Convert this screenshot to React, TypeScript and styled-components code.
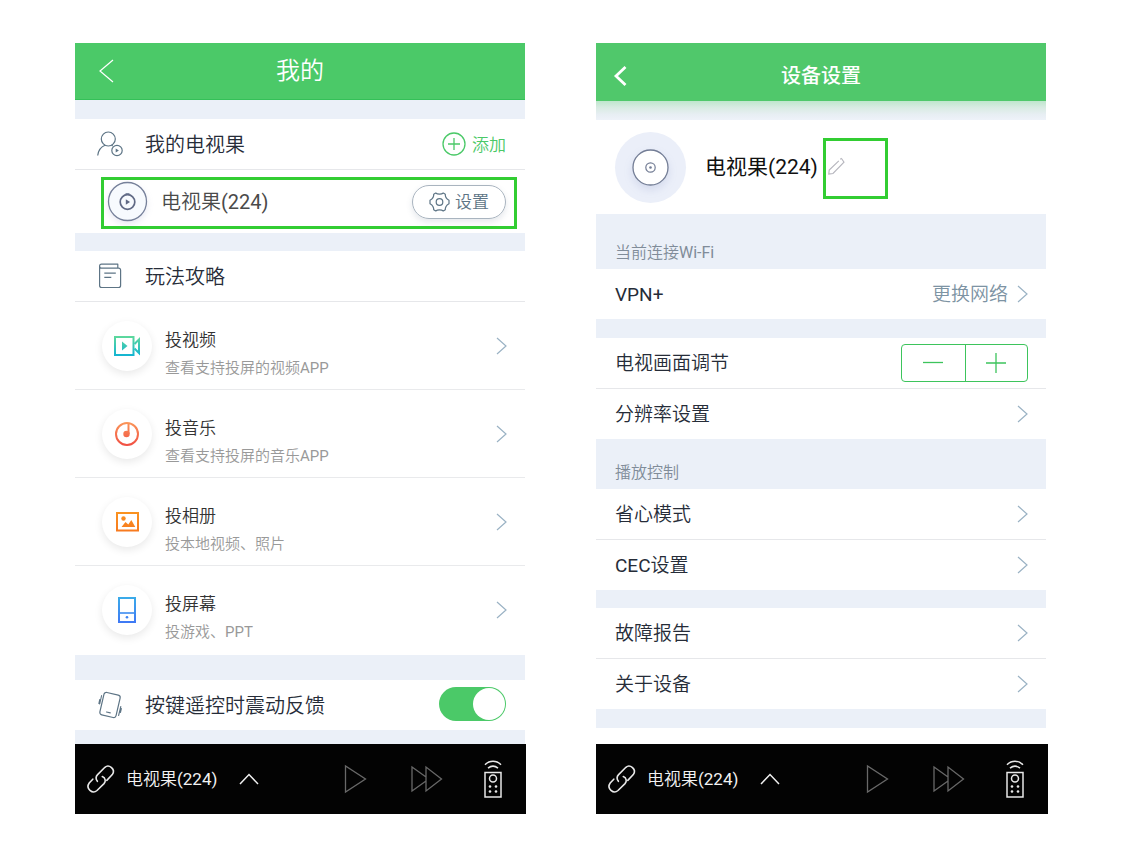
import React from "react";
import styled, { createGlobalStyle, css } from "styled-components";

const green = "#4bc968";
const band = "#ebf0f8";
const slate = "#5d7485";

const GlobalStyle = createGlobalStyle`
  *, *::before, *::after { box-sizing: border-box; }
  body {
    margin: 0;
    background: #fff;
    color: #262c38;
    font-family: Roboto, "Noto Sans CJK SC DemiLight", "Noto Sans CJK SC", sans-serif;
    font-weight: 400;
  }
  h1, h2, p, ul { margin: 0; padding: 0; font-size: inherit; font-weight: inherit; }
  ul { list-style: none; }
  button { font: inherit; color: inherit; background: none; border: 0; padding: 0; cursor: pointer; }
  a { color: inherit; text-decoration: none; }
  svg { display: block; flex: none; overflow: visible; }
`;

const Board = styled.main`
  display: grid;
  grid-template-columns: repeat(2, minmax(0, 1fr));
  gap: 71px;
  padding: 43px 88px 41px 75px;
`;

const Phone = styled.section`
  display: flex;
  flex-direction: column;
`;

const Header = styled.header<{ $raised?: boolean }>`
  display: grid;
  grid-template-columns: 60px 1fr 60px;
  align-items: center;
  height: 57px;
  color: #fff;
  background: ${green};
  border-bottom: 1px solid #34c058;
  font-size: 24px;
  line-height: 32px;
  h1 { text-align: center; }
  button { justify-self: start; margin-left: 24px; }

  ${(p) =>
    p.$raised &&
    css`
      height: 58px;
      padding: 8px 0 0;
      background: #50c86b;
      border-bottom: 0;
      font-family: Roboto, "Noto Sans CJK SC", sans-serif;
      font-size: 20px;
      font-weight: 500;
      button { margin-left: 18px; }
    `}
`;

const Band = styled.div<{ $h: number; $shade?: boolean }>`
  height: ${(p) => p.$h}px;
  background: ${(p) =>
    p.$shade ? "linear-gradient(#bfe6cd, #d9ebe3 35%, #e7eef3 70%, #eef2f9)" : band};
`;

const GroupLabel = styled.h2<{ $h: number }>`
  && { font-size: 16px; }
  display: flex;
  align-items: flex-end;
  height: ${(p) => p.$h}px;
  padding: 0 19px 4px;
  background: ${band};
  color: #808c99;
  line-height: 24px;
`;

const MenuHead = styled.div<{ $line?: boolean }>`
  display: flex;
  align-items: center;
  height: ${(p) => (p.$line ? 51 : 50)}px;
  padding: 0 19px 0 22px;
  border-bottom: ${(p) => (p.$line ? "1px solid #e6e7ea" : "0")};
  font-size: 20px;
  line-height: 28px;
  svg { margin-right: 22px; }
`;

const MenuTitle = styled.label`
  flex: 1;
  padding-top: 2px;
`;

const AddButton = styled.button`
  display: flex;
  align-items: center;
  color: ${green};
  font-size: 17px;
  line-height: 24px;
  && svg { margin-right: 6px; }
  span { padding-top: 2px; }
`;

const DeviceWrap = styled.div`
  padding: 7px 8px 4px 26px;
`;

const DeviceCard = styled.div`
  display: flex;
  align-items: center;
  height: 52px;
  padding: 0 8px 3px 3px;
  border: 3px solid #32cd32;
  color: #4a4a4a;
  font-size: 20px;
  line-height: 28px;
  span { flex: 1; margin-left: 13px; }
`;

const PillButton = styled.button`
  display: flex;
  align-items: center;
  justify-content: center;
  gap: 5px;
  width: 94px;
  height: 34px;
  border: 1px solid #a9b4bf;
  border-radius: 17px;
  box-shadow: 0 3px 6px rgba(70, 90, 120, 0.14);
  color: ${slate};
  font-size: 17px;
  line-height: 24px;
`;

const Guide = styled.a`
  display: flex;
  align-items: center;
  height: 88px;
  padding: 0 18px 0 27px;
  border-bottom: 1px solid #e9eaec;
  li:last-child > & { border-bottom-color: transparent; }
`;

const GuideList = styled.ul`
  && { padding-bottom: 1px; }
`;

const Disc = styled.span`
  display: grid;
  place-items: center;
  width: 50px;
  height: 50px;
  margin-right: 13px;
  border-radius: 50%;
  background: #fff;
  box-shadow: 0 3px 8px rgba(0, 0, 0, 0.09);
`;

const GuideText = styled.div`
  flex: 1;
  padding-top: 16px;
  line-height: 28px;
  h2 { color: #333; font-size: 17px; }
  p { color: #999; font-size: 15px; }
`;

const Toggle = styled.input`
  appearance: none;
  width: 67px;
  height: 34px;
  margin: 0 0 2px;
  padding: 1px;
  border-radius: 17px;
  background: ${green};
  cursor: pointer;
  &::before {
    content: "";
    display: block;
    width: 32px;
    height: 32px;
    border-radius: 50%;
    background: #fff;
  }
  &:checked::before { margin-left: auto; }
  &:not(:checked) { background: #ccd3da; }
`;

const Profile = styled.div`
  display: flex;
  align-items: center;
  height: 94px;
  padding: 0 19px;
  color: #111;
  font-family: Roboto, "Noto Sans CJK SC", sans-serif;
  font-size: 21px;
  line-height: 28px;
`;

const Avatar = styled.div`
  display: grid;
  place-items: center;
  width: 71px;
  height: 71px;
  margin-right: 19px;
  border-radius: 50%;
  background: #ebeff9;
`;

const EditButton = styled.button`
  display: flex;
  align-items: center;
  width: 65px;
  height: 61px;
  margin: 2px 0 0 5px;
  padding: 0 0 4px 2px;
  border: 3px solid #32cd32;
`;

const rowStyle = css<{ $line?: boolean }>`
  display: flex;
  align-items: center;
  gap: 9px;
  height: ${(p) => (p.$line ? 51 : 50)}px;
  padding: 0 18px 0 19px;
  border-bottom: ${(p) => (p.$line ? "1px solid #e6e7ea" : "0")};
  font-size: 19px;
  line-height: 28px;
`;
const Row = styled.div<{ $line?: boolean }>`${rowStyle}`;
const LinkRow = styled.a<{ $line?: boolean }>`${rowStyle}`;
const RowName = styled.span`
  flex: 1;
  padding-top: 2px;
`;
const RowValue = styled.span`
  padding-top: 2px;
  color: #7d93a3;
`;

const Stepper = styled.div`
  display: grid;
  grid-template-columns: 1fr 1fr;
  width: 127px;
  height: 38px;
  border: 1px solid #3dc45c;
  border-radius: 4px;
  button { display: grid; place-items: center; }
  button + button { border-left: 1px solid #3dc45c; }
`;

const Dock = styled.footer<{ $bleed: number }>`
  display: flex;
  align-items: center;
  height: 70px;
  margin: auto -${(p) => p.$bleed}px 0 0;
  padding: 0 24px 0 12px;
  background: #030303;
  color: #f2f2f2;
  font-size: 17px;
  line-height: 24px;
`;
const DockDevice = styled.button`
  display: flex;
  align-items: center;
  margin-right: auto;
  span { margin: 0 22px 0 11px; }
`;
const DockControls = styled.div`
  display: flex;
  align-items: center;
  gap: 42px;
`;

const Chevron = () => (
  <svg width="11" height="18" fill="none" stroke="#9ab2c4" strokeWidth="1.2">
    <path d="M1 1l9 8-9 8" />
  </svg>
);

const DeviceIcon = () => (
  <svg width="41" height="41" fill="none" stroke="#76809a">
    <circle cx="20.500" cy="20.500" r="19" fill="#f7fafe" strokeWidth="1.300" style={{ filter: "drop-shadow(0 3px 3px rgba(90,100,170,.14))" }} />
    <circle cx="20.500" cy="21" r="7.300" stroke="#606985" strokeWidth="1.700" />
    <path d="M18.800 18.300v5.400l4.300-2.700z" fill="#606985" stroke="none" />
    <path d="M18.500 12.600h4" strokeWidth="1" />
  </svg>
);

const MenuUser = () => (
  <svg width="26" height="26" viewBox="0 0 26 26" fill="none" stroke={slate} strokeWidth="1.2">
    <circle cx="11.300" cy="8" r="7" />
    <path d="M.7 24.500c.6-5.200 3-8.600 7.300-10.300M14.500 14.300l1.300.7" />
    <circle cx="20" cy="19.500" r="5.200" />
    <path d="M18.700 17.500v4l3.200-2z" fill={slate} stroke="none" />
  </svg>
);

const MenuBook = () => (
  <svg width="26" height="26" viewBox="0 0 26 26" fill="none" stroke={slate} strokeWidth="1.200" strokeLinejoin="round">
    <path d="M2.600 3.200V22.500a2 2 0 0 0 2 2h17a2 2 0 0 0 2-2V7.200a2 2 0 0 0-2-2H4.500c-2.500 0-2.500-4.100 0-4.100h16.300v4.100M7.300 10.200h11.500M7.300 14.300h7" />
  </svg>
);

const MenuShake = () => (
  <svg width="26" height="28" viewBox="0 0 26 28" fill="none" stroke={slate} strokeWidth="1.200" strokeLinecap="round">
    <rect x="4.700" y="2.500" width="16.600" height="23" rx="2.500" transform="rotate(13 13 14)" />
    <path d="M9.500 21l3.800.9M4.600 4.500L2.700 13M2.700 8.500l-.8 4M21.600 24.500l2.200-9M23.500 21.500l.9-4" strokeWidth="1.100" />
  </svg>
);

const VideoIcon = () => (
  <svg width="26" height="20" viewBox="0 0 26 20" fill="none" stroke="url(#gv)" strokeWidth="2">
    <defs>
      <linearGradient id="gv" gradientUnits="userSpaceOnUse" x1="0" y1="0" x2="0" y2="20">
        <stop stopColor="#5fd99b" />
        <stop offset="1" stopColor="#12b4d3" />
      </linearGradient>
    </defs>
    <path d="M1 1h18.500v18H1z" />
    <path d="M20.500 8l4.500-4.500v13.500l-4.500-4.500" strokeWidth="2" />
    <path d="M8 5.500v9l5.500-4.500z" fill="url(#gv)" stroke="none" />
  </svg>
);

const MusicIcon = () => (
  <svg width="26" height="26" viewBox="0 0 26 26" fill="none" stroke="url(#gm)" strokeWidth="2">
    <defs>
      <linearGradient id="gm" gradientUnits="userSpaceOnUse" x1="0" y1="0" x2="0" y2="26">
        <stop stopColor="#fb9a5b" />
        <stop offset="1" stopColor="#f04a41" />
      </linearGradient>
    </defs>
    <circle cx="13" cy="13" r="11" />
    <path d="M14.500 2v11" />
    <circle cx="12.500" cy="13" r="3.200" fill="url(#gm)" stroke="none" />
  </svg>
);

const PhotoIcon = () => (
  <svg width="23" height="20" viewBox="0 0 23 20" fill="none" stroke="url(#gp)" strokeWidth="2">
    <defs>
      <linearGradient id="gp" gradientUnits="userSpaceOnUse" x1="0" y1="0" x2="0" y2="20">
        <stop stopColor="#fa9320" />
        <stop offset="1" stopColor="#f7791f" />
      </linearGradient>
    </defs>
    <path d="M1 1h21v17.500H1z" />
    <circle cx="7.500" cy="6.500" r="2.200" fill="url(#gp)" stroke="none" />
    <path d="M5.500 15l4-5 2.800 2.500 3-4.500 4 7z" fill="url(#gp)" stroke="none" />
  </svg>
);

const ScreenIcon = () => (
  <svg width="18" height="26" viewBox="0 0 18 26" fill="none" stroke="url(#gs)" strokeWidth="2">
    <defs>
      <linearGradient id="gs" gradientUnits="userSpaceOnUse" x1="0" y1="0" x2="0" y2="26">
        <stop stopColor="#3aace9" />
        <stop offset="1" stopColor="#3f78f5" />
      </linearGradient>
    </defs>
    <path d="M1 1h16v24H1z" />
    <path d="M1 16h16" strokeWidth="1.600" />
    <circle cx="9" cy="20.300" r="1.300" fill="url(#gs)" stroke="none" />
  </svg>
);

const PlayerDock = ({ bleed }: { bleed: number }) => (
  <Dock $bleed={bleed}>
    <DockDevice type="button">
      <svg width="28" height="30" viewBox="0 0 28 30" fill="none" stroke="#e8e8e8" strokeWidth="1.600" strokeLinecap="round">
        <path d="M10.400 17.300C8.600 14.900 8.800 12.500 10.600 10.600L17.900 3.300C22 -.3 29 5.500 25.300 10.600L19.800 16.400M15.300 12.600C18.700 14 19 17.400 17 19.600L10 26.500C5.500 30.500-1.700 24.500 2.200 19L5.800 15.200" />
      </svg>
      <span>电视果(224)</span>
      <svg width="20" height="12" fill="none" stroke="#f0f0f0" strokeWidth="1.500">
        <path d="M1 11l9-9.500L19 11" />
      </svg>
    </DockDevice>
    <DockControls>
      <button type="button" aria-label="播放">
        <svg width="24" height="28" fill="none" stroke="#686868" strokeWidth="1.300">
          <path d="M.5 1v26l20-13z" />
        </svg>
      </button>
      <button type="button" aria-label="快进">
        <svg width="31" height="28" fill="none" stroke="#686868" strokeWidth="1.300">
          <path d="M15 12L1 2v24l14-10M15 2v24l15.500-12z" />
        </svg>
      </button>
      <button type="button" aria-label="遥控器">
        <svg width="18" height="38" fill="none" stroke="#e8e8e8" strokeWidth="1.500">
          <path d="M1 12.500h16v24.500H1zM1 4.800c4.500-4.700 11.500-4.700 16 0M4 8.200c3-2.500 7-2.500 10 0" />
          <circle cx="9" cy="18.500" r="3.500" />
          <g fill="#e8e8e8" stroke="none">
            <circle cx="6" cy="26.500" r="1.300" />
            <circle cx="12" cy="26.500" r="1.300" />
            <circle cx="6" cy="31.500" r="1.300" />
            <circle cx="12" cy="31.500" r="1.300" />
          </g>
        </svg>
      </button>
    </DockControls>
  </Dock>
);

const guides = [
  { title: "投视频", note: "查看支持投屏的视频APP", Icon: VideoIcon },
  { title: "投音乐", note: "查看支持投屏的音乐APP", Icon: MusicIcon },
  { title: "投相册", note: "投本地视频、照片", Icon: PhotoIcon },
  { title: "投屏幕", note: "投游戏、PPT", Icon: ScreenIcon },
];

const SettingLink = ({ name, value, line }: { name: string; value?: string; line?: boolean }) => (
  <LinkRow href="#" $line={line}>
    <RowName>{name}</RowName>
    {value && <RowValue>{value}</RowValue>}
    <Chevron />
  </LinkRow>
);

const MinePage = () => (
  <Phone>
    <Header>
      <button type="button" aria-label="返回">
        <svg width="15" height="24" fill="none" stroke="#fff" strokeWidth="1.200">
          <path d="M14 1L1 12l13 11" />
        </svg>
      </button>
      <h1>我的</h1>
    </Header>
    <Band $h={19} />
    <MenuHead $line>
      <MenuUser />
      <MenuTitle as="h2">我的电视果</MenuTitle>
      <AddButton type="button">
        <svg width="24" height="24" fill="none" stroke={green} strokeWidth="1.300">
          <circle cx="12" cy="12" r="11" />
          <path d="M12 6v12M6 12h12" />
        </svg>
        <span>添加</span>
      </AddButton>
    </MenuHead>
    <DeviceWrap>
      <DeviceCard>
        <DeviceIcon />
        <span>电视果(224)</span>
        <PillButton type="button">
          <svg width="21" height="20" viewBox="0 0 21 20" fill="none" stroke={slate} strokeWidth="1.200" strokeLinejoin="round">
            <path d="M6.700 1c1.700 1.400 5.900 1.400 7.600 0l2 1.200c-.2 2.400 1.200 4.700 3.700 6.100v3.400c-2.500 1.400-3.900 3.700-3.700 6.100l-2 1.200c-1.700-1.400-5.900-1.400-7.600 0l-2-1.200C4.900 15.400 3.500 13.100 1 11.700V8.300c2.500-1.400 3.900-3.700 3.700-6.100z" />
            <circle cx="10.500" cy="10" r="3.300" />
          </svg>
          设置
        </PillButton>
      </DeviceCard>
    </DeviceWrap>
    <Band $h={18} />
    <MenuHead $line>
      <MenuBook />
      <MenuTitle as="h2">玩法攻略</MenuTitle>
    </MenuHead>
    <GuideList>
      {guides.map(({ title, note, Icon }) => (
        <li key={title}>
          <Guide href="#">
            <Disc>
              <Icon />
            </Disc>
            <GuideText>
              <h2>{title}</h2>
              <p>{note}</p>
            </GuideText>
            <Chevron />
          </Guide>
        </li>
      ))}
    </GuideList>
    <Band $h={25} />
    <MenuHead>
      <MenuShake />
      <MenuTitle htmlFor="vibrate">按键遥控时震动反馈</MenuTitle>
      <Toggle id="vibrate" type="checkbox" defaultChecked />
    </MenuHead>
    <Band $h={14} />
    <PlayerDock bleed={1} />
  </Phone>
);

const DevicePage = () => (
  <Phone>
    <Header $raised>
      <button type="button" aria-label="返回">
        <svg width="13" height="20" fill="none" stroke="#fff" strokeWidth="2.800">
          <path d="M11.500 1L2 10l9.500 9" />
        </svg>
      </button>
      <h1>设备设置</h1>
    </Header>
    <Band $h={19} $shade />
    <Profile>
      <Avatar>
        <svg width="37" height="37" fill="none" stroke="#737d95">
          <circle cx="18.500" cy="18.500" r="17.500" fill="#fff" strokeWidth="1.300" style={{ filter: "drop-shadow(0 4px 4px rgba(80,100,170,.15))" }} />
          <circle cx="18.500" cy="18.500" r="4.700" strokeWidth="1.200" />
          <circle cx="18.500" cy="18.500" r="1.300" fill="#737d95" stroke="none" />
        </svg>
      </Avatar>
      <span>电视果(224)</span>
      <EditButton type="button" aria-label="修改名称">
        <svg width="17" height="18" fill="none" stroke="#b5b5bd" strokeWidth="1.100">
          <path d="M10.800 3.800L1.200 13 .8 17l4.200-.5L16 5.200 13.500 1.500M12.300 2.300l1.200-1.200" />
        </svg>
      </EditButton>
    </Profile>
    <GroupLabel $h={55}>当前连接Wi-Fi</GroupLabel>
    <SettingLink name="VPN+" value="更换网络" />
    <Band $h={19} />
    <Row $line>
      <RowName>电视画面调节</RowName>
      <Stepper>
        <button type="button" aria-label="缩小">
          <svg width="20" height="20" stroke="#3dc45c" strokeWidth="1.300">
            <path d="M0 9.500h20" />
          </svg>
        </button>
        <button type="button" aria-label="放大">
          <svg width="20" height="20" stroke="#3dc45c" strokeWidth="1.300">
            <path d="M0 10h20M10 0v20" />
          </svg>
        </button>
      </Stepper>
    </Row>
    <SettingLink name="分辨率设置" />
    <GroupLabel $h={50}>播放控制</GroupLabel>
    <SettingLink name="省心模式" line />
    <SettingLink name="CEC设置" />
    <Band $h={18} />
    <SettingLink name="故障报告" line />
    <SettingLink name="关于设备" />
    <Band $h={19} />
    <PlayerDock bleed={2} />
  </Phone>
);

export default function App() {
  return (
    <>
      <GlobalStyle />
      <Board>
        <MinePage />
        <DevicePage />
      </Board>
    </>
  );
}
